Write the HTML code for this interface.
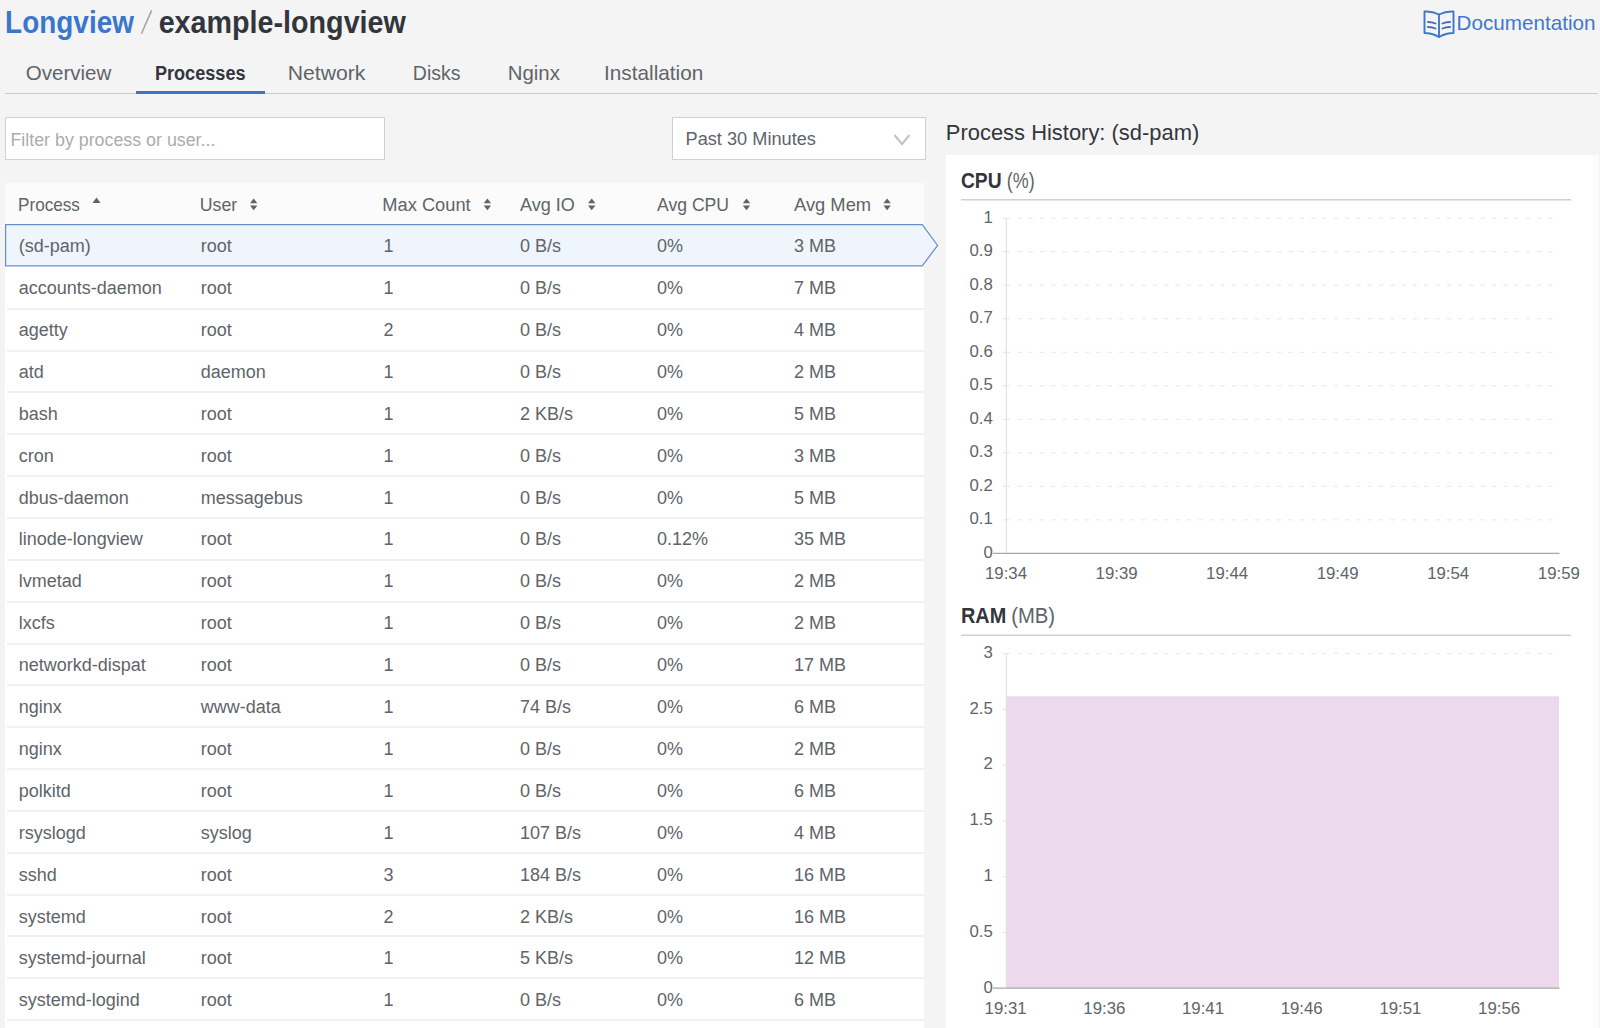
<!DOCTYPE html>
<html><head><meta charset="utf-8">
<style>
html,body{margin:0;padding:0;}
body{width:1600px;height:1028px;overflow:hidden;background:#f4f4f4;position:relative;font-family:"Liberation Sans",sans-serif;}
.a{position:absolute;}
</style></head><body>
<div class="a" style="left:5px;top:92.5px;width:1593px;height:1px;background:#cbcbcb"></div>
<div class="a" style="left:136px;top:91px;width:129px;height:3px;background:#3a78c6"></div>
<div class="a" style="left:5px;top:117px;width:378px;height:41px;background:#fff;border:1px solid #d0d0d0"></div>
<div class="a" style="left:672px;top:117px;width:252px;height:41px;background:#fff;border:1px solid #d0d0d0"></div>
<svg class="a" style="left:890px;top:130px" width="24" height="20" viewBox="0 0 24 20"><path d="M4.5 5 L12 14 L19.5 5" fill="none" stroke="#c4c4c4" stroke-width="2.2"/></svg>
<div class="a" style="left:5px;top:183px;width:919px;height:845px;background:#fff"></div>
<div class="a" style="left:5px;top:183px;width:919px;height:42px;background:#fbfbfb"></div>
<div class="a" style="left:7px;top:307.70px;width:917px;height:2px;background:#f1f1f1"></div>
<div class="a" style="left:7px;top:349.55px;width:917px;height:2px;background:#f1f1f1"></div>
<div class="a" style="left:7px;top:391.40px;width:917px;height:2px;background:#f1f1f1"></div>
<div class="a" style="left:7px;top:433.25px;width:917px;height:2px;background:#f1f1f1"></div>
<div class="a" style="left:7px;top:475.10px;width:917px;height:2px;background:#f1f1f1"></div>
<div class="a" style="left:7px;top:516.95px;width:917px;height:2px;background:#f1f1f1"></div>
<div class="a" style="left:7px;top:558.80px;width:917px;height:2px;background:#f1f1f1"></div>
<div class="a" style="left:7px;top:600.65px;width:917px;height:2px;background:#f1f1f1"></div>
<div class="a" style="left:7px;top:642.50px;width:917px;height:2px;background:#f1f1f1"></div>
<div class="a" style="left:7px;top:684.35px;width:917px;height:2px;background:#f1f1f1"></div>
<div class="a" style="left:7px;top:726.20px;width:917px;height:2px;background:#f1f1f1"></div>
<div class="a" style="left:7px;top:768.05px;width:917px;height:2px;background:#f1f1f1"></div>
<div class="a" style="left:7px;top:809.90px;width:917px;height:2px;background:#f1f1f1"></div>
<div class="a" style="left:7px;top:851.75px;width:917px;height:2px;background:#f1f1f1"></div>
<div class="a" style="left:7px;top:893.60px;width:917px;height:2px;background:#f1f1f1"></div>
<div class="a" style="left:7px;top:935.45px;width:917px;height:2px;background:#f1f1f1"></div>
<div class="a" style="left:7px;top:977.30px;width:917px;height:2px;background:#f1f1f1"></div>
<div class="a" style="left:7px;top:1019.15px;width:917px;height:2px;background:#f1f1f1"></div>
<svg class="a" style="left:0;top:220px" width="945" height="52" viewBox="0 220 945 52"><path d="M5.6 224.7 L922.3 224.7 L937.6 245.4 L922.3 265.9 L5.6 265.9 Z" fill="#eff5fd" stroke="#6890cf" stroke-width="1.25"/></svg>
<div class="a" style="left:946px;top:155px;width:652px;height:873px;background:#fff"></div>
<div class="a" style="left:1592px;top:155px;width:7px;height:873px;background:#fcfcfc"></div>
<svg class="a" style="left:0;top:0" width="1600" height="1028" viewBox="0 0 1600 1028">
<rect x="961" y="199" width="610" height="1.5" fill="#d0d0d0"/>
<rect x="961" y="634.5" width="610" height="1.5" fill="#d0d0d0"/>
<g stroke="#e6e6e6" stroke-width="1" stroke-dasharray="4.3 7">
<line x1="1006" y1="218.20" x2="1559.5" y2="218.20"/><line x1="1002.5" y1="218.20" x2="1006" y2="218.20" stroke-dasharray="none"/>
<line x1="1006" y1="251.72" x2="1559.5" y2="251.72"/><line x1="1002.5" y1="251.72" x2="1006" y2="251.72" stroke-dasharray="none"/>
<line x1="1006" y1="285.24" x2="1559.5" y2="285.24"/><line x1="1002.5" y1="285.24" x2="1006" y2="285.24" stroke-dasharray="none"/>
<line x1="1006" y1="318.76" x2="1559.5" y2="318.76"/><line x1="1002.5" y1="318.76" x2="1006" y2="318.76" stroke-dasharray="none"/>
<line x1="1006" y1="352.28" x2="1559.5" y2="352.28"/><line x1="1002.5" y1="352.28" x2="1006" y2="352.28" stroke-dasharray="none"/>
<line x1="1006" y1="385.80" x2="1559.5" y2="385.80"/><line x1="1002.5" y1="385.80" x2="1006" y2="385.80" stroke-dasharray="none"/>
<line x1="1006" y1="419.32" x2="1559.5" y2="419.32"/><line x1="1002.5" y1="419.32" x2="1006" y2="419.32" stroke-dasharray="none"/>
<line x1="1006" y1="452.84" x2="1559.5" y2="452.84"/><line x1="1002.5" y1="452.84" x2="1006" y2="452.84" stroke-dasharray="none"/>
<line x1="1006" y1="486.36" x2="1559.5" y2="486.36"/><line x1="1002.5" y1="486.36" x2="1006" y2="486.36" stroke-dasharray="none"/>
<line x1="1006" y1="519.88" x2="1559.5" y2="519.88"/><line x1="1002.5" y1="519.88" x2="1006" y2="519.88" stroke-dasharray="none"/>
</g>
<line x1="1006.25" y1="218.2" x2="1006.25" y2="553.4" stroke="#dcdcdc" stroke-width="1"/>
<line x1="993" y1="553.4" x2="1559.5" y2="553.4" stroke="#a8a8a8" stroke-width="1.3"/>
<g stroke="#e6e6e6" stroke-width="1" stroke-dasharray="4.3 7">
<line x1="1006" y1="653.60" x2="1559.5" y2="653.60"/><line x1="1002.5" y1="653.60" x2="1006" y2="653.60" stroke-dasharray="none"/>
<line x1="1006" y1="709.37" x2="1559.5" y2="709.37"/><line x1="1002.5" y1="709.37" x2="1006" y2="709.37" stroke-dasharray="none"/>
<line x1="1006" y1="765.13" x2="1559.5" y2="765.13"/><line x1="1002.5" y1="765.13" x2="1006" y2="765.13" stroke-dasharray="none"/>
<line x1="1006" y1="820.90" x2="1559.5" y2="820.90"/><line x1="1002.5" y1="820.90" x2="1006" y2="820.90" stroke-dasharray="none"/>
<line x1="1006" y1="876.67" x2="1559.5" y2="876.67"/><line x1="1002.5" y1="876.67" x2="1006" y2="876.67" stroke-dasharray="none"/>
<line x1="1006" y1="932.43" x2="1559.5" y2="932.43"/><line x1="1002.5" y1="932.43" x2="1006" y2="932.43" stroke-dasharray="none"/>
</g>
<rect x="1006.5" y="696.3" width="552.5" height="291.9" fill="#ecd9ee"/>
<line x1="1006.25" y1="653.6" x2="1006.25" y2="988.2" stroke="#dcdcdc" stroke-width="1"/>
<line x1="993" y1="988.2" x2="1559.5" y2="988.2" stroke="#a8a8a8" stroke-width="1.3"/>
</svg>
<svg class="a" style="left:1421px;top:8px" width="36" height="32" viewBox="0 0 36 32">
<g fill="none" stroke="#3d78cc" stroke-width="1.9" stroke-linejoin="round" stroke-linecap="round">
<path d="M3.5 3.5 Q11 3 18 6.5 Q25 3 32.5 3.5 L32.5 25 Q25 25 18 29 Q11 25 3.5 25 Z"/>
<path d="M18 6.5 L18 29"/>
<path d="M7 14 Q11 14 14.5 15.5 M7 19 Q11 19 14.5 20.5 M21.5 15.5 Q25 14 29 14 M21.5 20.5 Q25 19 29 19" stroke="#3f6cb0"/>
</g></svg>
<svg class="a" style="left:0;top:0" width="200" height="50"><line x1="141.4" y1="33.8" x2="151.6" y2="10.4" stroke="#a2a2a2" stroke-width="1.5"/></svg>
<svg class="a" style="left:0;top:180px" width="930" height="40" viewBox="0 180 930 40"><g fill="#5f6368">
<path d="M92.5 203 L96.5 197.5 L100.5 203 Z"/>
<path d="M250 203.3 L253.7 198.5 L257.4 203.3 Z M250 205.5 L253.7 210.3 L257.4 205.5 Z"/>
<path d="M483.7 203.3 L487.4 198.5 L491.09999999999997 203.3 Z M483.7 205.5 L487.4 210.3 L491.09999999999997 205.5 Z"/>
<path d="M588 203.3 L591.7 198.5 L595.4 203.3 Z M588 205.5 L591.7 210.3 L595.4 205.5 Z"/>
<path d="M742.8 203.3 L746.5 198.5 L750.1999999999999 203.3 Z M742.8 205.5 L746.5 210.3 L750.1999999999999 205.5 Z"/>
<path d="M883.4 203.3 L887.1 198.5 L890.8 203.3 Z M883.4 205.5 L887.1 210.3 L890.8 205.5 Z"/>
</g></svg>
<svg class="a" style="left:0;top:0" width="1600" height="1028" viewBox="0 0 1600 1028" font-family="Liberation Sans">
<text transform="translate(5.12 32.7) scale(0.907 1)" font-size="30.8" font-weight="700" fill="#3a76cc">Longview</text>
<text transform="translate(158.64 32.75) scale(0.9321 1)" font-size="30.8" font-weight="700" fill="#32363c">example-longview</text>
<text transform="translate(1456.55 30) scale(1.0409 1)" font-size="19.86" font-weight="400" fill="#3f78cc">Documentation</text>
<text transform="translate(25.78 79.6) scale(1.0277 1)" font-size="20.0" font-weight="400" fill="#606469">Overview</text>
<text transform="translate(154.91 79.8) scale(0.8812 1)" font-size="20.58" font-weight="700" fill="#32363c">Processes</text>
<text transform="translate(287.71 80) scale(1.0149 1)" font-size="20.87" font-weight="400" fill="#606469">Network</text>
<text transform="translate(412.84 80) scale(0.9426 1)" font-size="20.72" font-weight="400" fill="#606469">Disks</text>
<text transform="translate(507.71 80.2) scale(0.9733 1)" font-size="21.01" font-weight="400" fill="#606469">Nginx</text>
<text transform="translate(604.03 80.2) scale(0.9888 1)" font-size="21.01" font-weight="400" fill="#606469">Installation</text>
<text transform="translate(10.47 145.7) scale(0.9763 1)" font-size="18.26" font-weight="400" fill="#acacac">Filter by process or user...</text>
<text transform="translate(685.54 144.8) scale(0.9811 1)" font-size="18.55" font-weight="400" fill="#606469">Past 30 Minutes</text>
<text transform="translate(945.85 140.3) scale(0.9765 1)" font-size="22.46" font-weight="400" fill="#32363c">Process History: (sd-pam)</text>
<text transform="translate(18.03 210.6) scale(0.9024 1)" font-size="18.99" font-weight="400" fill="#606469">Process</text>
<text transform="translate(199.76 210.6) scale(0.9349 1)" font-size="18.99" font-weight="400" fill="#606469">User</text>
<text transform="translate(382.29 210.6) scale(0.9637 1)" font-size="18.99" font-weight="400" fill="#606469">Max Count</text>
<text transform="translate(520.0 210.6) scale(0.951 1)" font-size="18.99" font-weight="400" fill="#606469">Avg IO</text>
<text transform="translate(657.0 210.6) scale(0.9272 1)" font-size="18.99" font-weight="400" fill="#606469">Avg CPU</text>
<text transform="translate(794.0 210.6) scale(0.9664 1)" font-size="18.99" font-weight="400" fill="#606469">Avg Mem</text>
<text transform="translate(960.93 188) scale(0.9051 1)" font-size="21.29" font-weight="700" fill="#32363c">CPU</text>
<text transform="translate(1006.83 188) scale(0.8405 1)" font-size="21.29" font-weight="400" fill="#606469">(%)</text>
<text transform="translate(961.01 623) scale(0.9294 1)" font-size="21.38" font-weight="700" fill="#32363c">RAM</text>
<text transform="translate(1011.18 623) scale(0.9479 1)" font-size="21.38" font-weight="400" fill="#606469">(MB)</text>
<g font-size="18" fill="#606469">
<text x="18.8" y="252.10">(sd-pam)</text>
<text x="200.8" y="252.10">root</text>
<text x="383.5" y="252.10">1</text>
<text x="520" y="252.10">0 B/s</text>
<text x="657" y="252.10">0%</text>
<text x="794" y="252.10">3 MB</text>
<text x="18.8" y="294.00">accounts-daemon</text>
<text x="200.8" y="294.00">root</text>
<text x="383.5" y="294.00">1</text>
<text x="520" y="294.00">0 B/s</text>
<text x="657" y="294.00">0%</text>
<text x="794" y="294.00">7 MB</text>
<text x="18.8" y="335.90">agetty</text>
<text x="200.8" y="335.90">root</text>
<text x="383.5" y="335.90">2</text>
<text x="520" y="335.90">0 B/s</text>
<text x="657" y="335.90">0%</text>
<text x="794" y="335.90">4 MB</text>
<text x="18.8" y="377.80">atd</text>
<text x="200.8" y="377.80">daemon</text>
<text x="383.5" y="377.80">1</text>
<text x="520" y="377.80">0 B/s</text>
<text x="657" y="377.80">0%</text>
<text x="794" y="377.80">2 MB</text>
<text x="18.8" y="419.70">bash</text>
<text x="200.8" y="419.70">root</text>
<text x="383.5" y="419.70">1</text>
<text x="520" y="419.70">2 KB/s</text>
<text x="657" y="419.70">0%</text>
<text x="794" y="419.70">5 MB</text>
<text x="18.8" y="461.60">cron</text>
<text x="200.8" y="461.60">root</text>
<text x="383.5" y="461.60">1</text>
<text x="520" y="461.60">0 B/s</text>
<text x="657" y="461.60">0%</text>
<text x="794" y="461.60">3 MB</text>
<text x="18.8" y="503.50">dbus-daemon</text>
<text x="200.8" y="503.50">messagebus</text>
<text x="383.5" y="503.50">1</text>
<text x="520" y="503.50">0 B/s</text>
<text x="657" y="503.50">0%</text>
<text x="794" y="503.50">5 MB</text>
<text x="18.8" y="545.40">linode-longview</text>
<text x="200.8" y="545.40">root</text>
<text x="383.5" y="545.40">1</text>
<text x="520" y="545.40">0 B/s</text>
<text x="657" y="545.40">0.12%</text>
<text x="794" y="545.40">35 MB</text>
<text x="18.8" y="587.30">lvmetad</text>
<text x="200.8" y="587.30">root</text>
<text x="383.5" y="587.30">1</text>
<text x="520" y="587.30">0 B/s</text>
<text x="657" y="587.30">0%</text>
<text x="794" y="587.30">2 MB</text>
<text x="18.8" y="629.20">lxcfs</text>
<text x="200.8" y="629.20">root</text>
<text x="383.5" y="629.20">1</text>
<text x="520" y="629.20">0 B/s</text>
<text x="657" y="629.20">0%</text>
<text x="794" y="629.20">2 MB</text>
<text x="18.8" y="671.10">networkd-dispat</text>
<text x="200.8" y="671.10">root</text>
<text x="383.5" y="671.10">1</text>
<text x="520" y="671.10">0 B/s</text>
<text x="657" y="671.10">0%</text>
<text x="794" y="671.10">17 MB</text>
<text x="18.8" y="713.00">nginx</text>
<text x="200.8" y="713.00">www-data</text>
<text x="383.5" y="713.00">1</text>
<text x="520" y="713.00">74 B/s</text>
<text x="657" y="713.00">0%</text>
<text x="794" y="713.00">6 MB</text>
<text x="18.8" y="754.90">nginx</text>
<text x="200.8" y="754.90">root</text>
<text x="383.5" y="754.90">1</text>
<text x="520" y="754.90">0 B/s</text>
<text x="657" y="754.90">0%</text>
<text x="794" y="754.90">2 MB</text>
<text x="18.8" y="796.80">polkitd</text>
<text x="200.8" y="796.80">root</text>
<text x="383.5" y="796.80">1</text>
<text x="520" y="796.80">0 B/s</text>
<text x="657" y="796.80">0%</text>
<text x="794" y="796.80">6 MB</text>
<text x="18.8" y="838.70">rsyslogd</text>
<text x="200.8" y="838.70">syslog</text>
<text x="383.5" y="838.70">1</text>
<text x="520" y="838.70">107 B/s</text>
<text x="657" y="838.70">0%</text>
<text x="794" y="838.70">4 MB</text>
<text x="18.8" y="880.60">sshd</text>
<text x="200.8" y="880.60">root</text>
<text x="383.5" y="880.60">3</text>
<text x="520" y="880.60">184 B/s</text>
<text x="657" y="880.60">0%</text>
<text x="794" y="880.60">16 MB</text>
<text x="18.8" y="922.50">systemd</text>
<text x="200.8" y="922.50">root</text>
<text x="383.5" y="922.50">2</text>
<text x="520" y="922.50">2 KB/s</text>
<text x="657" y="922.50">0%</text>
<text x="794" y="922.50">16 MB</text>
<text x="18.8" y="964.40">systemd-journal</text>
<text x="200.8" y="964.40">root</text>
<text x="383.5" y="964.40">1</text>
<text x="520" y="964.40">5 KB/s</text>
<text x="657" y="964.40">0%</text>
<text x="794" y="964.40">12 MB</text>
<text x="18.8" y="1006.30">systemd-logind</text>
<text x="200.8" y="1006.30">root</text>
<text x="383.5" y="1006.30">1</text>
<text x="520" y="1006.30">0 B/s</text>
<text x="657" y="1006.30">0%</text>
<text x="794" y="1006.30">6 MB</text>
</g>
<g font-size="16.8" fill="#606469" text-anchor="end">
<text x="992.8" y="222.50">1</text>
<text x="992.8" y="256.02">0.9</text>
<text x="992.8" y="289.54">0.8</text>
<text x="992.8" y="323.06">0.7</text>
<text x="992.8" y="356.58">0.6</text>
<text x="992.8" y="390.10">0.5</text>
<text x="992.8" y="423.62">0.4</text>
<text x="992.8" y="457.14">0.3</text>
<text x="992.8" y="490.66">0.2</text>
<text x="992.8" y="524.18">0.1</text>
<text x="992.8" y="557.70">0</text>
</g><g font-size="16.8" fill="#606469" text-anchor="middle">
<text x="1006.0" y="579">19:34</text>
<text x="1116.6" y="579">19:39</text>
<text x="1227.1" y="579">19:44</text>
<text x="1337.7" y="579">19:49</text>
<text x="1448.2" y="579">19:54</text>
<text x="1558.8" y="579">19:59</text>
</g>
<g font-size="16.8" fill="#606469" text-anchor="end">
<text x="992.8" y="657.90">3</text>
<text x="992.8" y="713.67">2.5</text>
<text x="992.8" y="769.43">2</text>
<text x="992.8" y="825.20">1.5</text>
<text x="992.8" y="880.97">1</text>
<text x="992.8" y="936.73">0.5</text>
<text x="992.8" y="992.50">0</text>
</g><g font-size="16.8" fill="#606469" text-anchor="middle">
<text x="1005.6" y="1014.2">19:31</text>
<text x="1104.3" y="1014.2">19:36</text>
<text x="1203.0" y="1014.2">19:41</text>
<text x="1301.7" y="1014.2">19:46</text>
<text x="1400.4" y="1014.2">19:51</text>
<text x="1499.1" y="1014.2">19:56</text>
</g>
</svg>
</body></html>
